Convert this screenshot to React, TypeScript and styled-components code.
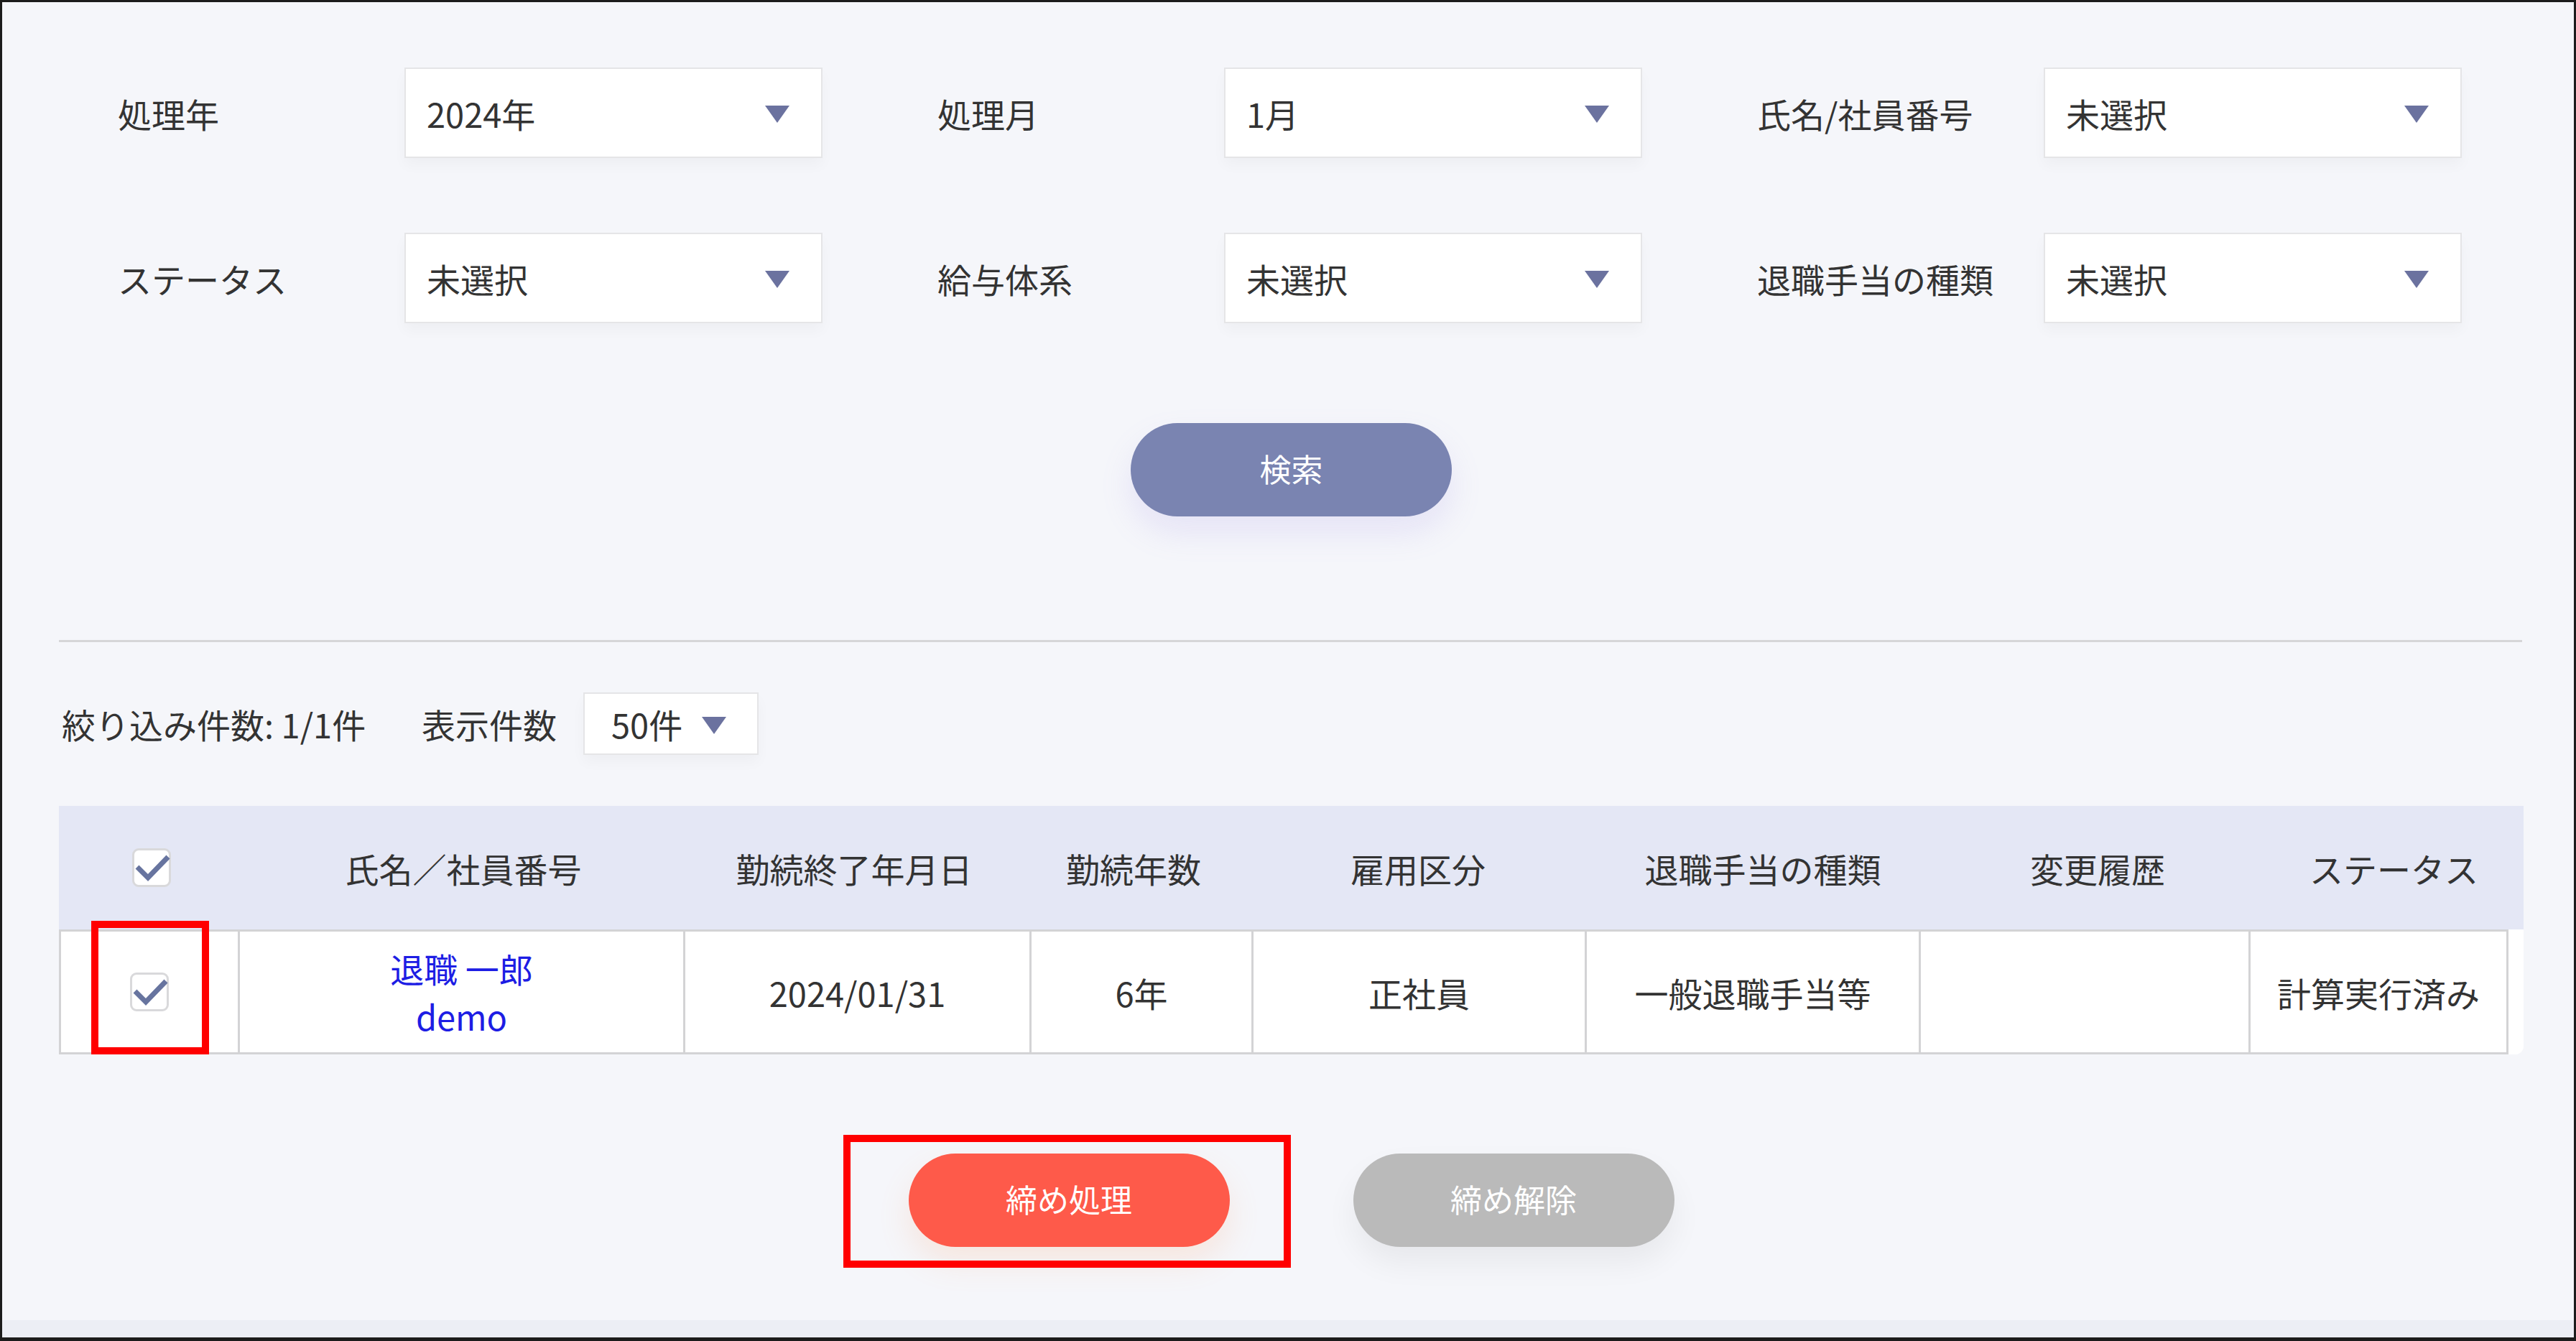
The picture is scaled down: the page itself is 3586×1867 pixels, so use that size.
import React from "react";
import styled, { createGlobalStyle } from "styled-components";

const Global = createGlobalStyle`
  html, body { margin: 0; padding: 0; background: #f5f6fa; }
  * { box-sizing: border-box; }
  body { font-family: "Noto Sans CJK JP", "Noto Sans", sans-serif; color: #333; }
`;

const Frame = styled.div`
  width: 3586px;
  height: 1867px;
  border: 3px solid #1c1c1c;
  border-bottom-width: 5px;
  display: flex;
  flex-direction: column;
  background: #f5f6fa;
`;

const Main = styled.main`
  flex: 1;
  padding: 91px 70px 0 79px;
  display: flex;
  flex-direction: column;
`;

const FooterBand = styled.div`
  height: 24px;
  background: #eceef5;
`;

const FieldGrid = styled.div`
  display: grid;
  grid-template-columns: repeat(3, 981px);
  column-gap: 160px;
  row-gap: 104px;
  padding-left: 82px;
`;

const Field = styled.div`
  display: flex;
  align-items: center;
`;

const Label = styled.span`
  width: 399px;
  font-size: 47px;
  color: #333;
  white-space: nowrap;
`;

const SelectBox = styled.div<{ $w: number; $h: number; $pl: number; $pr: number }>`
  width: ${(p) => p.$w}px;
  height: ${(p) => p.$h}px;
  background: #fff;
  border: 2px solid #e5e5e7;
  box-shadow: 0 10px 18px rgba(0, 0, 0, 0.03);
  display: flex;
  align-items: center;
  justify-content: space-between;
  padding: 0 ${(p) => p.$pr}px 0 ${(p) => p.$pl}px;
  font-size: 47px;
  color: #333;
`;

const Caret = styled.span`
  width: 0;
  height: 0;
  border-left: 17px solid transparent;
  border-right: 17px solid transparent;
  border-top: 24px solid #6b729f;
  margin-top: 4px;
`;

const ButtonRow = styled.div<{ $mt: number }>`
  display: flex;
  justify-content: center;
  gap: 172px;
  margin-top: ${(p) => p.$mt}px;
`;

const PillButton = styled.button<{ $bg: string; $glow: string }>`
  width: 447px;
  height: 130px;
  border: none;
  border-radius: 65px;
  background: ${(p) => p.$bg};
  color: #fff;
  font-family: "Noto Sans CJK JP", sans-serif;
  font-size: 44px;
  line-height: 1;
  padding-bottom: 6px;
  box-shadow: 0 22px 44px ${(p) => p.$glow};
  cursor: pointer;
`;

const Highlighted = styled.div`
  position: relative;
  display: flex;
  &::after {
    content: "";
    position: absolute;
    left: -91px;
    right: -85px;
    top: -26px;
    bottom: -29px;
    border: 10px solid #ff0000;
    pointer-events: none;
  }
`;

const Divider = styled.hr`
  margin: 172px 2px 0 0;
  border: none;
  height: 3px;
  background: #d6d6d8;
`;

const FilterBar = styled.div`
  display: flex;
  align-items: center;
  margin-top: 70px;
  font-size: 47px;
  color: #333;
`;

const Count = styled.span`
  width: 505px;
  padding-left: 4px;
  white-space: nowrap;
`;

const PerPage = styled.span`
  width: 225px;
  white-space: nowrap;
`;

const Table = styled.div`
  margin-top: 71px;
  width: 3431px;
`;

const bodyCols = "252px 620px 482px 309px 464px 465px 459px 359px 21px";
const headCols = "258px 610px 478px 300px 492px 468px 464px 361px";

const HeadRow = styled.div`
  display: grid;
  grid-template-columns: ${headCols};
  height: 172px;
  background: #e4e7f5;
`;

const HeadCell = styled.div`
  display: flex;
  align-items: center;
  justify-content: center;
  font-size: 47px;
  color: #333;
  white-space: nowrap;
`;

const BodyRow = styled.div`
  display: grid;
  grid-template-columns: ${bodyCols};
  height: 174px;
  background: #fff;
  border-bottom-right-radius: 12px;
`;

const Cell = styled.div<{ $first?: boolean }>`
  position: relative;
  display: flex;
  flex-direction: column;
  align-items: center;
  justify-content: center;
  font-size: 47px;
  color: #333;
  border-top: 3px solid #d3d3d5;
  border-bottom: 3px solid #d3d3d5;
  border-right: 3px solid #d3d3d5;
  border-left: ${(p) => (p.$first ? "3px solid #d3d3d5" : "none")};
  white-space: nowrap;
`;

const Filler = styled.div`
  background: #fff;
  border-bottom-right-radius: 12px;
`;

const NameLink = styled.a`
  color: #1d1de4;
  text-decoration: none;
  line-height: 67px;
  font-size: 47px;
`;

const CellMark = styled.div`
  position: absolute;
  left: 42px;
  top: -15px;
  width: 164px;
  height: 186px;
  border: 10px solid #ff0000;
  pointer-events: none;
`;

const CheckBox = styled.span`
  width: 54px;
  height: 54px;
  border: 3px solid #d9d9db;
  border-radius: 9px;
  background: #fff;
  display: inline-flex;
  align-items: center;
  justify-content: center;
  position: relative;
`;

const Check = () => (
  <CheckBox>
    <svg width="54" height="54" viewBox="0 0 54 54" style={{ position: "absolute", left: -3, top: -3, overflow: "visible" }}>
      <path d="M7 26 L22 41 L50 12" fill="none" stroke="#67749f" strokeWidth="7" />
    </svg>
  </CheckBox>
);

const fields: [string, string][] = [
  ["処理年", "2024年"],
  ["処理月", "1月"],
  ["氏名/社員番号", "未選択"],
  ["ステータス", "未選択"],
  ["給与体系", "未選択"],
  ["退職手当の種類", "未選択"],
];

const headers = ["氏名／社員番号", "勤続終了年月日", "勤続年数", "雇用区分", "退職手当の種類", "変更履歴", "ステータス"];

export default function App() {
  return (
    <>
      <Global />
      <Frame>
        <Main>
          <FieldGrid>
            {fields.map(([l, v]) => (
              <Field key={l}>
                <Label>{l}</Label>
                <SelectBox $w={582} $h={126} $pl={29} $pr={44}>
                  <span>{v}</span>
                  <Caret />
                </SelectBox>
              </Field>
            ))}
          </FieldGrid>

          <ButtonRow $mt={139}>
            <PillButton $bg="#7a84b1" $glow="rgba(150, 130, 230, 0.16)">検索</PillButton>
          </ButtonRow>

          <Divider />

          <FilterBar>
            <Count>絞り込み件数: 1/1件</Count>
            <PerPage>表示件数</PerPage>
            <SelectBox $w={244} $h={87} $pl={37} $pr={43}>
              <span>50件</span>
              <Caret />
            </SelectBox>
          </FilterBar>

          <Table>
            <HeadRow>
              <HeadCell>
                <Check />
              </HeadCell>
              {headers.map((h) => (
                <HeadCell key={h}>{h}</HeadCell>
              ))}
            </HeadRow>
            <BodyRow>
              <Cell $first>
                <Check />
                <CellMark />
              </Cell>
              <Cell>
                <NameLink href="#">退職 一郎</NameLink>
                <NameLink href="#">demo</NameLink>
              </Cell>
              <Cell>2024/01/31</Cell>
              <Cell>6年</Cell>
              <Cell>正社員</Cell>
              <Cell>一般退職手当等</Cell>
              <Cell></Cell>
              <Cell>計算実行済み</Cell>
              <Filler />
            </BodyRow>
          </Table>

          <ButtonRow $mt={138}>
            <Highlighted>
              <PillButton $bg="#fe5a4a" $glow="rgba(255, 150, 90, 0.16)">締め処理</PillButton>
            </Highlighted>
            <PillButton $bg="#bababa" $glow="rgba(0, 0, 0, 0.06)">締め解除</PillButton>
          </ButtonRow>
        </Main>
        <FooterBand />
      </Frame>
    </>
  );
}
